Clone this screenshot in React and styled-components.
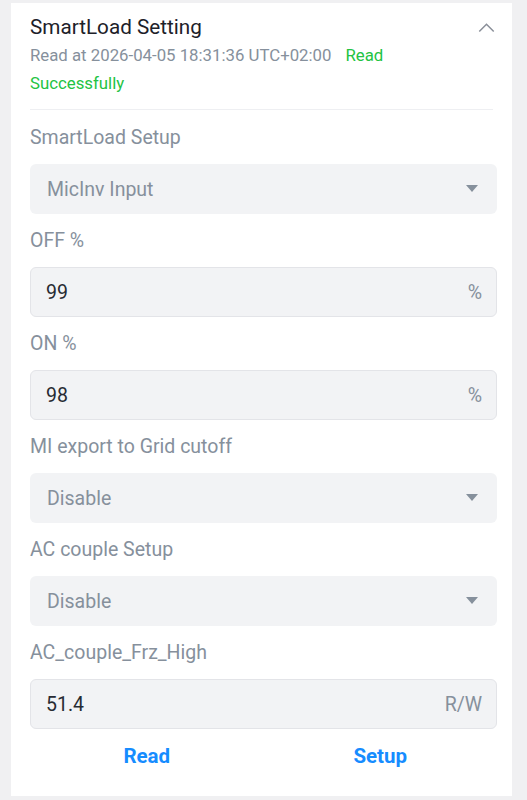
import styled, { createGlobalStyle } from "styled-components";

const GlobalStyle = createGlobalStyle`
  html, body {
    margin: 0;
    padding: 0;
    background-color: #f0f0f2;
    font-family: Roboto, "Liberation Sans", Arial, sans-serif;
  }
  * { box-sizing: border-box; }
`;

const fields = [
  { label: "SmartLoad Setup", type: "select", value: "MicInv Input" },
  { label: "OFF %", type: "input", value: "99", suffix: "%" },
  { label: "ON %", type: "input", value: "98", suffix: "%" },
  { label: "MI export to Grid cutoff", type: "select", value: "Disable" },
  { label: "AC couple Setup", type: "select", value: "Disable" },
  { label: "AC_couple_Frz_High", type: "input", value: "51.4", suffix: "R/W" },
];

const App = () => {
  return (
    <>
      <GlobalStyle />
      <Page>
        <Card>
          <CardHeader>
            <TitleRow>
              <Title>SmartLoad Setting</Title>
              <Chevron viewBox="0 0 16 10" aria-hidden="true">
                <path d="M1.2 8.8 L8 2 L14.8 8.8" fill="none" stroke="#8a8f99" strokeWidth="1.4" />
              </Chevron>
            </TitleRow>
            <ReadInfo>
              Read at 2026-04-05 18:31:36 UTC+02:00
              <Success>Read Successfully</Success>
            </ReadInfo>
          </CardHeader>
          <Divider />
          {fields.map((f) => (
            <Field key={f.label}>
              <FieldLabel>{f.label}</FieldLabel>
              {f.type === "select" ? (
                <SelectBox>
                  <SelectText>{f.value}</SelectText>
                  <Caret viewBox="0 0 12 8" aria-hidden="true">
                    <path d="M0 0 H12 L6 7 Z" fill="#86909c" />
                  </Caret>
                </SelectBox>
              ) : (
                <InputBox>
                  <InputValue>{f.value}</InputValue>
                  <Suffix>{f.suffix}</Suffix>
                </InputBox>
              )}
            </Field>
          ))}
          <ButtonRow>
            <ActionButton>Read</ActionButton>
            <ActionButton>Setup</ActionButton>
          </ButtonRow>
        </Card>
      </Page>
    </>
  );
};

const Page = styled.div`
  width: 527px;
  min-height: 800px;
  padding: 3px 15px 4px 11px;
`;

const Card = styled.div`
  width: 501px;
  background-color: #ffffff;
  padding: 11px 15px 26px 19px;
`;

const CardHeader = styled.div`
  padding-right: 2px;
`;

const TitleRow = styled.div`
  display: flex;
  align-items: center;
  justify-content: space-between;
  height: 28px;
  margin-top: -1px;
`;

const Title = styled.div`
  font-size: 20.7px;
  line-height: 28px;
  color: #1d2129;
`;

const Chevron = styled.svg`
  width: 17px;
  height: 11px;
`;

const ReadInfo = styled.div`
  font-size: 16.8px;
  line-height: 28px;
  color: #86909c;
  padding-right: 100px;
`;

const Success = styled.span`
  color: #23c343;
  margin-left: 14px;
`;

const Divider = styled.div`
  height: 1px;
  background-color: #eeeff2;
  margin: 12px 4px 1px 0;
`;

const Field = styled.div`
  display: flex;
  flex-direction: column;
`;

const FieldLabel = styled.div`
  font-size: 19.5px;
  line-height: 25px;
  padding: 14px 0 14px;
  color: #86909c;
`;

const SelectBox = styled.div`
  display: flex;
  align-items: center;
  justify-content: space-between;
  height: 50px;
  padding: 0 19px 0 17px;
  background-color: #f2f3f5;
  border-radius: 6px;
`;

const SelectText = styled.span`
  font-size: 19.5px;
  color: #86909c;
`;

const Caret = styled.svg`
  width: 12px;
  height: 8px;
`;

const InputBox = styled.div`
  display: flex;
  align-items: center;
  justify-content: space-between;
  height: 50px;
  padding: 0 14px 0 15px;
  background-color: #f2f3f5;
  border: 1px solid #e3e4e8;
  border-radius: 6px;
`;

const InputValue = styled.span`
  font-size: 19.5px;
  color: #272b33;
`;

const Suffix = styled.span`
  font-size: 19.5px;
  color: #86909c;
`;

const ButtonRow = styled.div`
  display: grid;
  grid-template-columns: 1fr 1fr;
  margin-top: 13px;
`;

const ActionButton = styled.button`
  border: none;
  background: none;
  font-family: Roboto, "Liberation Sans", Arial, sans-serif;
  font-size: 20.5px;
  font-weight: 700;
  color: #168cff;
  height: 28px;
  padding: 0;
  cursor: pointer;
`;

export default App;
